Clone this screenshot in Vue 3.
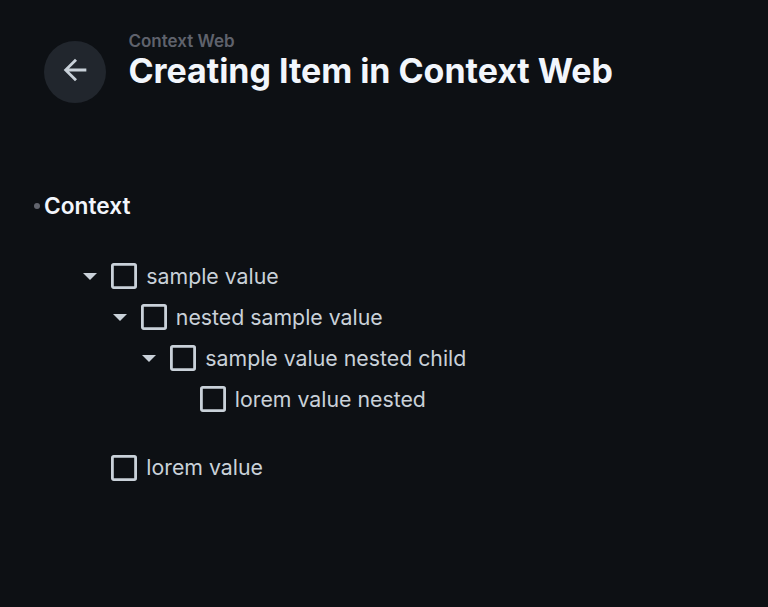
<script setup>
const items = [
  { text: 'sample value', depth: 0, open: true },
  { text: 'nested sample value', depth: 1, open: true },
  { text: 'sample value nested child', depth: 2, open: true },
  { text: 'lorem value nested', depth: 3, open: false },
  { text: 'lorem value', depth: 0, open: false, separate: true },
]
</script>

<template>
  <main class="page">
    <header class="header">
      <button class="back" aria-label="Back">
        <svg width="34" height="34" viewBox="0 0 24 24"><path d="M20 11H7.83l5.59-5.59L12 4l-8 8 8 8 1.41-1.41L7.83 13H20v-2z" /></svg>
      </button>
      <div class="titles">
        <div class="crumb">Context Web</div>
        <h1>Creating Item in Context Web</h1>
      </div>
    </header>
    <h2><span class="dot"></span><span>Context</span></h2>
    <ul class="tree">
      <li v-for="item in items" :key="item.text" :class="{ separate: item.separate }" :style="{ paddingLeft: item.depth * 29.5 + 'px' }">
        <span class="toggle"><svg v-if="item.open" width="14" height="7" viewBox="0 0 14 7"><path d="M0 0h14L7 7z" /></svg></span>
        <svg class="box" width="26" height="26" viewBox="0 0 26 26"><rect x="1.4" y="1.4" width="23.2" height="23.2" rx="1.3" /></svg>
        <span class="label">{{ item.text }}</span>
      </li>
    </ul>
  </main>
</template>

<style>
body { background: #0d1014; }
</style>
<style scoped>
.page { box-sizing: border-box; height: 607px; padding: 32px 34px 0; background: #0d1014; color: #f2f6fc; font-family: Inter, sans-serif; overflow: hidden; }
.header { display: flex; gap: 22px; height: 72px; padding-left: 10px; }
.back { width: 62px; height: 62px; margin-top: 9px; padding: 0 1px 4px 0; border: 0; border-radius: 50%; background: #21262d; display: grid; place-items: center; }
.back svg { fill: #c9d1d9; }
.titles { padding-left: 0.4px; }
.crumb { font-size: 17px; line-height: 19px; font-weight: 600; color: #5f626c; }
h1 { margin: 0; font-size: 34px; line-height: 40px; font-weight: 700; letter-spacing: -0.04px; white-space: nowrap; }
h2 { display: flex; align-items: center; gap: 4px; margin: 86px 0 0; font-size: 22.7px; line-height: 32px; font-weight: 600; }
.dot { width: 6px; height: 6px; border-radius: 50%; background: #62656e; }
.tree { margin: 34px 0 0 49px; padding: 0; list-style: none; }
li { display: flex; align-items: center; height: 41px; }
.separate { margin-top: 27px; }
.toggle { display: flex; width: 28px; }
.toggle svg { fill: #c9d1d9; }
.box { margin-bottom: 1px; fill: none; stroke: #c9d1d9; stroke-width: 2.8; }
.separate .box { margin-bottom: 0; }
.label { margin: 0 0 1px 9.3px; font-size: 21.3px; line-height: 26px; color: #c9d1d9; white-space: nowrap; }
</style>
